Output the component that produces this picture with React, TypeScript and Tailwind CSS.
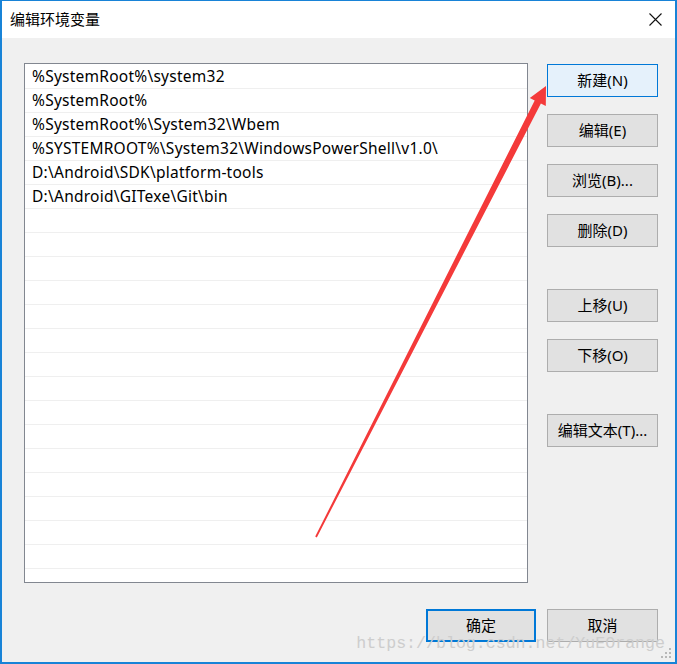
const PATHS = [
  "%SystemRoot%\\system32",
  "%SystemRoot%",
  "%SystemRoot%\\System32\\Wbem",
  "%SYSTEMROOT%\\System32\\WindowsPowerShell\\v1.0\\",
  "D:\\Android\\SDK\\platform-tools",
  "D:\\Android\\GITexe\\Git\\bin",
];

const ROWS = Array.from({ length: 22 }, (_, i) => PATHS[i] ?? "");

const font = {
  fontFamily: '"Noto Sans", "Noto Sans CJK SC", sans-serif',
};

const WinButton = ({
  label,
  active,
  primary,
  className = "",
}: {
  label: string;
  active?: boolean;
  primary?: boolean;
  className?: string;
}) => {
  const look = primary
    ? "border-2 border-[#0078d7] bg-[#e1e1e1]"
    : active
      ? "border border-[#0078d7] bg-[#e5f1fb]"
      : "border border-[#adadad] bg-[#e1e1e1]";
  return (
    <div
      className={`flex h-[33px] items-center justify-center text-[15px] leading-none text-black ${look} ${className}`}
    >
      {label}
    </div>
  );
};

const RedArrow = () => (
  <svg
    className="pointer-events-none absolute left-0 top-0"
    width="677"
    height="664"
    viewBox="0 0 677 664"
  >
    <polygon
      points="544,85 543.8,105.1 538.9,102.6 314.8,536.4 313.2,535.6 532.7,99.4 527.8,96.9"
      fill="#f43a3a"
    />
  </svg>
);

const ResizeGrip = () => (
  <svg
    className="pointer-events-none absolute right-[3px] bottom-[3px]"
    width="12"
    height="12"
    viewBox="0 0 12 12"
  >
    <g fill="#b8b8b8">
      <rect x="9" y="1" width="2" height="2" />
      <rect x="5" y="5" width="2" height="2" />
      <rect x="9" y="5" width="2" height="2" />
      <rect x="1" y="9" width="2" height="2" />
      <rect x="5" y="9" width="2" height="2" />
      <rect x="9" y="9" width="2" height="2" />
    </g>
  </svg>
);

export default function App() {
  return (
    <div
      className="relative flex h-[664px] w-[677px] flex-col overflow-hidden border-x-2 border-t border-b-2 border-[#1883d7] bg-[#f0f0f0]"
      style={font}
    >
      {/* title bar */}
      <div className="flex h-[37px] shrink-0 items-center justify-between bg-white pl-[8px] pr-[13px]">
        <span className="text-[15px] leading-none text-black">
          编辑环境变量
        </span>
        <svg width="13" height="13" viewBox="0 0 13 13">
          <path
            d="M0.5 0.5 L12.5 12.5 M12.5 0.5 L0.5 12.5"
            stroke="#111"
            strokeWidth="1.1"
          />
        </svg>
      </div>

      {/* body */}
      <div className="flex flex-1 flex-col pl-[22px] pr-[17px] pt-[25px]">
        <div className="flex gap-[19px]">
          <div className="h-[520px] w-[504px] overflow-hidden border border-[#828790] bg-white pt-px">
            {ROWS.map((p, i) => (
              <div
                key={i}
                className="flex h-[24px] items-center border-b border-[#efefef] pl-[7px] pt-px text-[15.5px] leading-none tracking-[0.25px] text-black"
              >
                {p}
              </div>
            ))}
          </div>

          <div className="flex w-[111px] flex-col pt-px">
            <div className="flex flex-col gap-[17px]">
              <WinButton label="新建(N)" active />
              <WinButton label="编辑(E)" />
              <WinButton label="浏览(B)..." />
              <WinButton label="删除(D)" />
            </div>
            <div className="mt-[42px] flex flex-col gap-[17px]">
              <WinButton label="上移(U)" />
              <WinButton label="下移(O)" />
            </div>
            <WinButton label="编辑文本(T)..." className="mt-[42px]" />
          </div>
        </div>

        <div className="mt-[26px] flex justify-end gap-[11px]">
          <div className="w-[110px]">
            <WinButton label="确定" primary />
          </div>
          <div className="w-[111px]">
            <WinButton label="取消" />
          </div>
        </div>
      </div>

      <div
        className="pointer-events-none absolute bottom-[9px] right-[10px] text-[16.6px] leading-none text-[#cdcdcd]"
        style={{ fontFamily: '"Liberation Mono", monospace' }}
      >
        https://blog.csdn.net/YuEOrange
      </div>

      <RedArrow />
      <ResizeGrip />
    </div>
  );
}
